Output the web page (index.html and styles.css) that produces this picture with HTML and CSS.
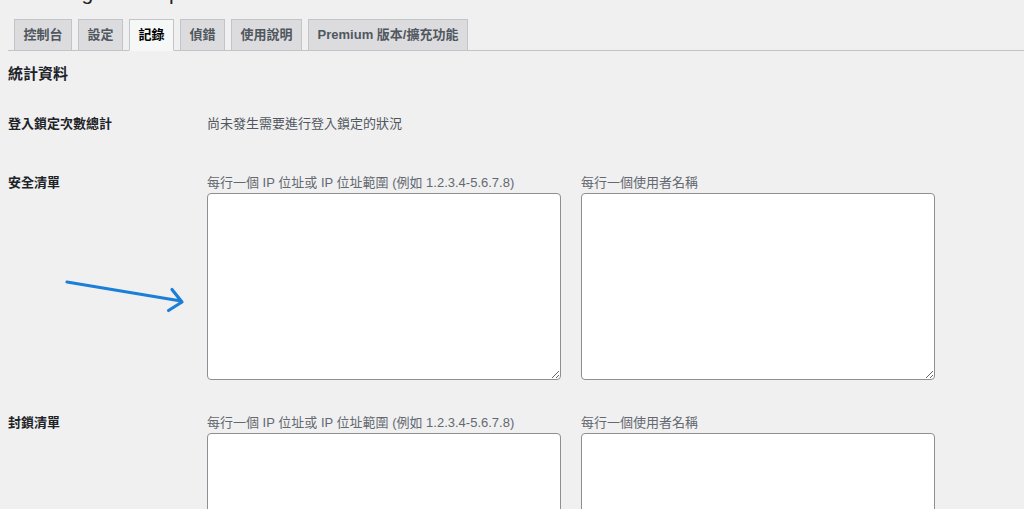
FILE: index.html
```html
<!DOCTYPE html>
<html lang="zh-Hant">
<head>
    <meta charset="UTF-8">
    <meta name="viewport" content="width=device-width, initial-scale=1.0">
    <title>Limit Login Attempts Reloaded - 記錄</title>

    <link rel="stylesheet" href="styles.css">
</head>
<body>
    <div class="wrap">
        <h1 class="page-title">Limit Login Attempts Reloaded</h1>

        <nav class="nav-tabs">
            <a href="#" class="nav-tab">控制台</a>
            <a href="#" class="nav-tab">設定</a>
            <a href="#" class="nav-tab active">記錄</a>
            <a href="#" class="nav-tab">偵錯</a>
            <a href="#" class="nav-tab">使用說明</a>
            <a href="#" class="nav-tab">Premium 版本/擴充功能</a>
        </nav>

        <h2 class="section-title">統計資料</h2>

        <div class="form-table">
            <div class="form-row first">
                <div class="th">登入鎖定次數總計</div>
                <div class="td desc">尚未發生需要進行登入鎖定的狀況</div>
            </div>

            <div class="form-row">
                <div class="th">安全清單</div>
                <div class="td fields">
                    <label class="field">
                        <span>每行一個 IP 位址或 IP 位址範圍 (例如 1.2.3.4-5.6.7.8)</span>
                        <textarea></textarea>
                    </label>
                    <label class="field">
                        <span>每行一個使用者名稱</span>
                        <textarea></textarea>
                    </label>
                </div>
            </div>

            <div class="form-row">
                <div class="th">封鎖清單</div>
                <div class="td fields">
                    <label class="field">
                        <span>每行一個 IP 位址或 IP 位址範圍 (例如 1.2.3.4-5.6.7.8)</span>
                        <textarea></textarea>
                    </label>
                    <label class="field">
                        <span>每行一個使用者名稱</span>
                        <textarea></textarea>
                    </label>
                </div>
            </div>
        </div>
    </div>

    <!-- 설명용 화살표 -->
    <svg class="arrow" width="200" height="60" viewBox="0 260 200 60">
        <path d="M67 282 L181 301 M172 289.5 L182 302 L168.5 310.5" fill="none" stroke="#1b7fd8" stroke-width="3.2" stroke-linecap="round" stroke-linejoin="round"/>
    </svg>
</body>
</html>
```

FILE: styles.css
```css
* {
    margin:0;
    padding:0;
    box-sizing:border-box;
}

html, body {
    height:100%;
    overflow:hidden;
}

body {
    background:#f0f0f1;
    color:#1d2327;
    font-family:"Liberation Sans", "Noto Sans CJK TC", sans-serif;
    font-size:13px;
    line-height:20px;
}

a {
    text-decoration:none;
}

.wrap {
    padding-left:8px;
}

.page-title {
    margin-top:-21px;
    font-size:21px;
    line-height:27px;
    font-weight:400;
    color:#1d2327;
}

.nav-tabs {
    display:flex;
    gap:6px;
    padding:13px 0 0 6px;
    border-bottom:1px solid #c3c4c7;
}

.nav-tab {
    display:block;
    margin-bottom:-1px;
    padding:4px 8.5px;
    line-height:22px;
    font-size:13px;
    font-weight:600;
    color:#50575e;
    background:#dcdcde;
    border:1px solid #c3c4c7;
}

.nav-tab.active {
    color:#000;
    background:#f6f7f7;
    border-bottom-color:#f6f7f7;
}

.section-title {
    margin-top:13px;
    font-size:15px;
    line-height:20px;
    font-weight:600;
}

.form-table {
    margin-top:8px;
}

.form-row {
    display:grid;
    grid-template-columns:199px 1fr;
    padding:16px 0 17px;
}

.form-row.first .th,
.form-row.first .td {
    line-height:32px;
}

.th {
    font-weight:600;
    color:#1d2327;
}

.desc {
    color:#50575e;
}

.fields {
    display:flex;
    gap:20px;
}

.field {
    display:flex;
    flex-direction:column;
    color:#646970;
}

.field textarea {
    display:block;
    width:354px;
    height:187px;
    border:1px solid #8c8f94;
    border-radius:4px;
    background:#fff;
}

.arrow {
    position:absolute;
    top:260px;
    left:0;
}
```
